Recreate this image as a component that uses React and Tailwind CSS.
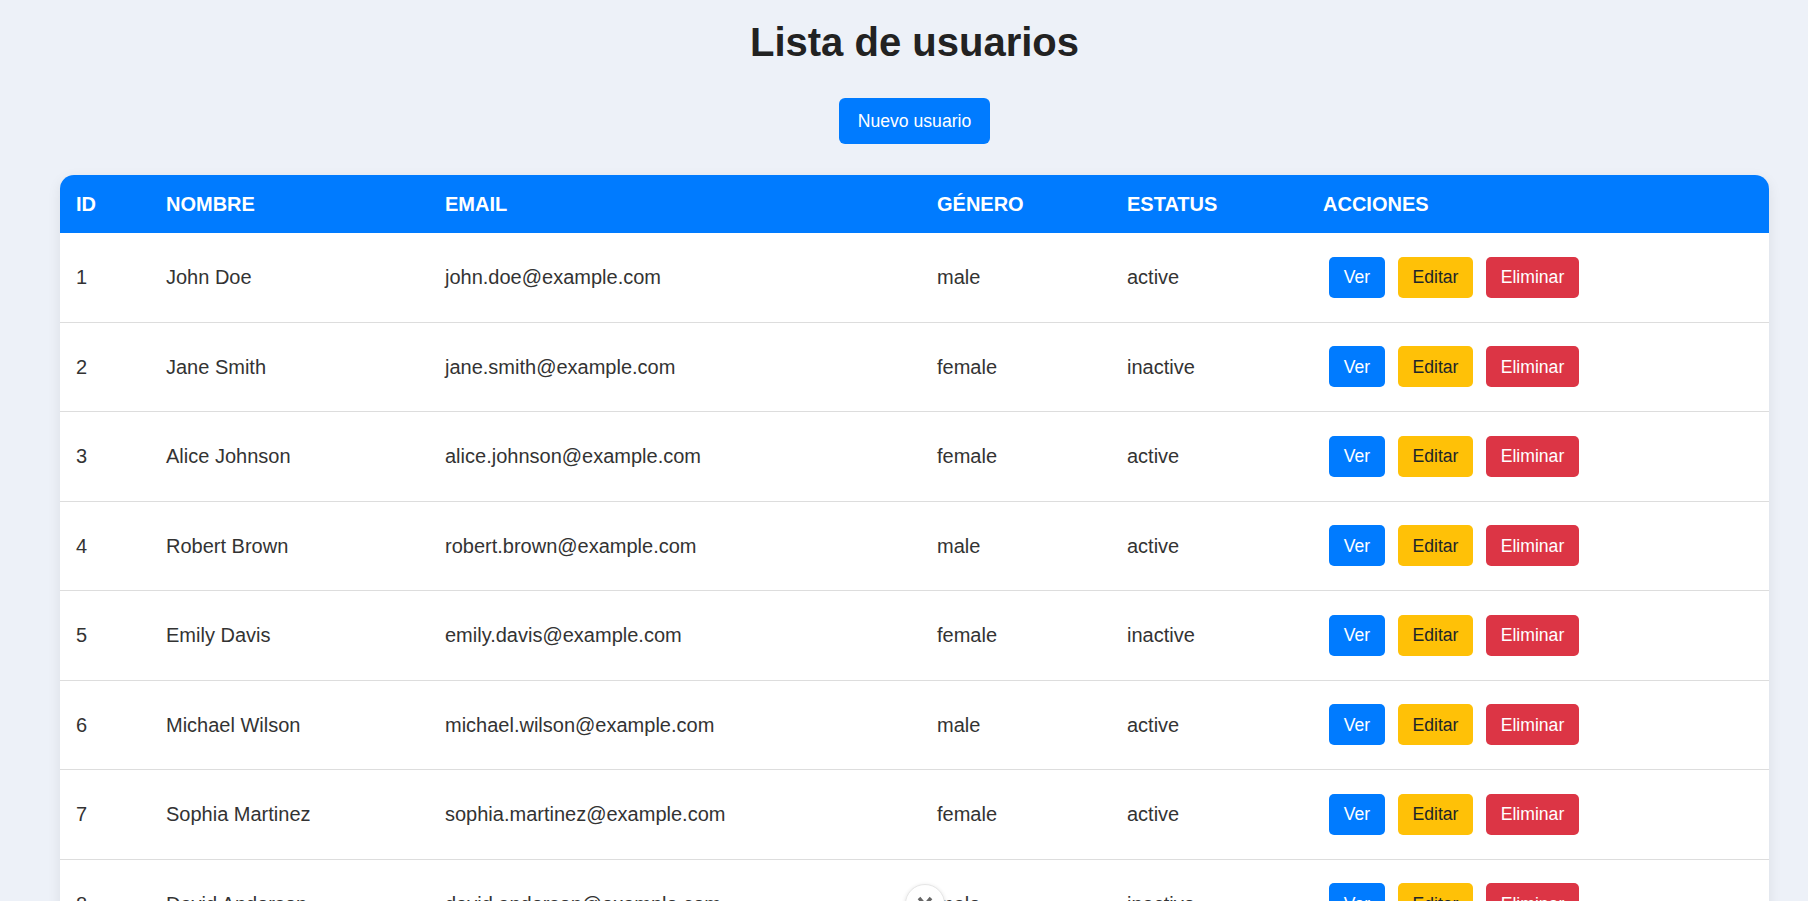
import React from 'react';

const users = [
  { id: 1, name: 'John Doe', email: 'john.doe@example.com', gender: 'male', status: 'active' },
  { id: 2, name: 'Jane Smith', email: 'jane.smith@example.com', gender: 'female', status: 'inactive' },
  { id: 3, name: 'Alice Johnson', email: 'alice.johnson@example.com', gender: 'female', status: 'active' },
  { id: 4, name: 'Robert Brown', email: 'robert.brown@example.com', gender: 'male', status: 'active' },
  { id: 5, name: 'Emily Davis', email: 'emily.davis@example.com', gender: 'female', status: 'inactive' },
  { id: 6, name: 'Michael Wilson', email: 'michael.wilson@example.com', gender: 'male', status: 'active' },
  { id: 7, name: 'Sophia Martinez', email: 'sophia.martinez@example.com', gender: 'female', status: 'active' },
  { id: 8, name: 'David Anderson', email: 'david.anderson@example.com', gender: 'male', status: 'inactive' },
];

const cols = 'grid grid-cols-[90px_279px_492px_190px_196px_1fr]';

const App = () => {
  return (
    <div className="relative h-screen overflow-hidden bg-[#edf1f8] font-['Liberation_Sans',Arial,sans-serif]">
      {/* Title */}
      <h1 className="pl-[21px] pt-[19px] text-center text-[40px] font-bold leading-[46px] text-[#222]">Lista de usuarios</h1>

      <div className="mt-[33px] flex justify-center pl-[21px]">
        <button className="h-[46px] w-[151px] rounded-[6px] bg-[#007bff] text-[17.6px] text-white">Nuevo usuario</button>
      </div>

      {/* Table */}
      <div className="ml-[60px] mt-[31px] w-[1709px] overflow-hidden rounded-[14px] bg-white shadow-[0_4px_14px_rgba(0,0,0,0.08)]">
        <div className={`${cols} h-[58px] items-center bg-[#007bff] text-[20px] font-bold text-white`}>
          <div className="px-4">ID</div>
          <div className="px-4">NOMBRE</div>
          <div className="px-4">EMAIL</div>
          <div className="px-4">GÉNERO</div>
          <div className="px-4">ESTATUS</div>
          <div className="px-4">ACCIONES</div>
        </div>

        {users.map((u) => (
          <div key={u.id} className={`${cols} h-[89.5px] items-center border-b border-[#dddddd] text-[20px] text-[#333]`}>
            <div className="px-4">{u.id}</div>
            <div className="px-4">{u.name}</div>
            <div className="px-4">{u.email}</div>
            <div className="px-4">{u.gender}</div>
            <div className="px-4">{u.status}</div>
            <div className="flex gap-[13px] px-4 pl-[22px] text-[17.6px]">
              <button className="h-[41px] w-[56px] rounded-[5px] bg-[#007bff] text-white">Ver</button>
              <button className="h-[41px] w-[75px] rounded-[5px] bg-[#ffc107] text-[#212529]">Editar</button>
              <button className="h-[41px] w-[93px] rounded-[5px] bg-[#dc3545] text-white">Eliminar</button>
            </div>
          </div>
        ))}
      </div>

      {/* floating round button */}
      <div className="absolute left-[905px] top-[884px] flex h-[40px] w-[40px] items-start justify-center rounded-full border border-[#e6e6e6] bg-white shadow-[0_1px_4px_rgba(0,0,0,0.12)]">
        <svg width="18" height="18" viewBox="0 0 18 18" className="mt-[11px]">
          <path d="M3 2 L15 16 M15 2 L3 16" stroke="#666" strokeWidth="3.5" strokeLinecap="butt" />
        </svg>
      </div>
    </div>
  );
};

export default App;
